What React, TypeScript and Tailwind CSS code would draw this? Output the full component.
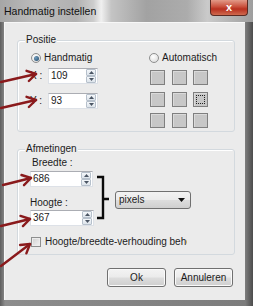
import React from 'react';

type Pt = [number, number];

// red annotation arrow: shaft plus an open two-stroke head at the tip
function Arrow({ from, to }: { from: Pt; to: Pt }) {
  const dx = to[0] - from[0];
  const dy = to[1] - from[1];
  const len = Math.hypot(dx, dy);
  const ux = dx / len;
  const uy = dy / len;
  const head = 10;
  const rot = (a: number): Pt => {
    const c = Math.cos(a);
    const s = Math.sin(a);
    return [to[0] - head * (ux * c - uy * s), to[1] - head * (ux * s + uy * c)];
  };
  const a = rot(0.55);
  const b = rot(-0.55);
  return (
    <g stroke="#8a1a1c" strokeWidth={2.4} fill="none" strokeLinecap="round" strokeLinejoin="round">
      <line x1={from[0]} y1={from[1]} x2={to[0]} y2={to[1]} />
      <polyline points={`${a[0]},${a[1]} ${to[0]},${to[1]} ${b[0]},${b[1]}`} />
    </g>
  );
}

function Spin() {
  return (
    <div className="flex flex-col mr-px">
      {[0, 1].map((i) => (
        <div
          key={i}
          className="w-[10px] h-[7px] rounded-[1px] border border-[#b6c0cb] bg-[linear-gradient(#f4f7fa,#dde4eb)] flex items-center justify-center"
        >
          <svg width="5" height="3" viewBox="0 0 5 3">
            <path d={i === 0 ? 'M0 3 L2.5 0 L5 3 Z' : 'M0 0 L2.5 3 L5 0 Z'} fill="#4a5563" />
          </svg>
        </div>
      ))}
    </div>
  );
}

function NumInput({ value, width }: { value: string; width: string }) {
  return (
    <div
      className={`${width} h-[16px] bg-white border border-[#dde1e7] border-t-[#abadb3] flex items-center justify-between pl-[2px]`}
    >
      <span className="leading-none">{value}</span>
      <Spin />
    </div>
  );
}

function Radio({ checked }: { checked?: boolean }) {
  return (
    <div className="w-[10px] h-[10px] rounded-full border border-[#8e8f8f] bg-[radial-gradient(circle_at_40%_35%,#ffffff,#d6d6d6)] flex items-center justify-center">
      {checked && (
        <div className="w-[5px] h-[5px] rounded-full bg-[radial-gradient(circle_at_35%_35%,#6f9bbd,#1f4766)]" />
      )}
    </div>
  );
}

function Group({ label, className, children }: { label: string; className: string; children: React.ReactNode }) {
  return (
    <div className={`relative w-[218px] rounded-[3px] border border-[#d3d9de] shadow-[inset_1px_1px_0_#ffffff] ${className}`}>
      <span className="absolute left-[7px] -top-[7px] px-px bg-[#ebebeb] leading-[12px]">{label}</span>
      {children}
    </div>
  );
}

function Button({ children }: { children: React.ReactNode }) {
  return (
    <div className="w-[59px] h-[19px] rounded-[3px] border border-[#707070] bg-[linear-gradient(#f3f3f3_0%,#ebebeb_48%,#dddddd_52%,#cfcfcf_100%)] shadow-[inset_0_0_0_1px_#fafafa] flex items-center justify-center">
      {children}
    </div>
  );
}

export default function App() {
  const cells = Array.from({ length: 9 }, (_, i) => i);
  return (
    <div className="relative w-[253px] h-[306px] overflow-hidden bg-[linear-gradient(90deg,#5e5e5e,#8d8d8d_2%,#7c7c7c_97%,#4c4c4c)] font-['Liberation_Sans',Arial,sans-serif] text-[10px] text-[#1b1b1b]">
      {/* title bar */}
      <div className="h-[22px] flex items-start bg-[linear-gradient(90deg,#a6a6a6_0%,#bcbcbc_14%,#b1b1b1_30%,#cdcdcd_37%,#f0f0f0_40%,#c4c4c4_44%,#a2a2a2_58%,#acacac_74%,#cacaca_82%,#9e9e9e_100%)]">
        <span className="ml-[4px] mt-[5px] leading-[12px] text-[10.5px] text-[#111]">Handmatig instellen</span>
        <div className="ml-auto mr-[5px] w-[38px] h-[16px] rounded-b-[4px] border border-t-0 border-[#5b2a22] bg-[linear-gradient(#e29a88,#c9503c_45%,#b8301f_60%,#cf6a4f)] flex items-center justify-center">
          <span className="text-white font-bold text-[11px] leading-none">x</span>
        </div>
      </div>

      <div className="flex h-[278px]">
        <div className="w-[4px]" />
        {/* client area */}
        <div className="w-[241px] bg-[#ebebeb] border-t border-l border-[#f7f7f7] pl-[12px] pt-[17px] flex flex-col">
          <Group label="Positie" className="h-[92px] flex">
            <div className="pl-[12px] pt-[11px] flex flex-col w-[131px]">
              <div className="h-[12px] flex items-center gap-[3px] pl-[1px]">
                <Radio checked />
                <span className="leading-none">Handmatig</span>
              </div>
              <div className="mt-[4px] h-[16px] flex items-center">
                <span className="w-[18px] leading-none">X :</span>
                <NumInput value="109" width="w-[50px]" />
              </div>
              <div className="mt-[9px] h-[16px] flex items-center">
                <span className="w-[18px] leading-none">Y :</span>
                <NumInput value="93" width="w-[50px]" />
              </div>
            </div>
            <div className="pt-[11px] flex flex-col">
              <div className="h-[12px] flex items-center gap-[3px]">
                <Radio />
                <span className="leading-none">Automatisch</span>
              </div>
              <div className="mt-[6px] ml-[1px] grid grid-cols-3 gap-x-[6.5px] gap-y-[6.5px] w-[58px]">
                {cells.map((i) => (
                  <div
                    key={i}
                    className="w-[15px] h-[15px] border border-[#7f7f7f] bg-[#c7c7c7] shadow-[inset_1px_1px_0_#dadada] flex items-center justify-center"
                  >
                    {i === 5 && <div className="w-[9px] h-[9px] border border-dotted border-[#222]" />}
                  </div>
                ))}
              </div>
            </div>
          </Group>

          <Group label="Afmetingen" className="mt-[17px] h-[106px] flex flex-col pl-[12px] pt-[7px]">
            <div className="flex items-center">
              <div className="flex flex-col">
                <span className="h-[12px] leading-[12px] pl-[2px]">Breedte :</span>
                <div className="mt-[2px]">
                  <NumInput value="686" width="w-[63px]" />
                </div>
                <span className="mt-[10px] h-[12px] leading-[12px]">Hoogte :</span>
                <div className="mt-[1px]">
                  <NumInput value="367" width="w-[64px]" />
                </div>
              </div>
              <div className="ml-[21px] mt-[16px] w-[76px] h-[18px] rounded-[3px] border border-[#707070] bg-[linear-gradient(#f2f2f2_0%,#ebebeb_48%,#dddddd_52%,#cfcfcf_100%)] flex items-center justify-between pl-[3px] pr-[5px]">
                <span className="leading-none">pixels</span>
                <svg width="7" height="4" viewBox="0 0 7 4">
                  <path d="M0 0 L3.5 4 L7 0 Z" fill="#111" />
                </svg>
              </div>
            </div>
            <div className="mt-[10px] h-[11px] flex items-center gap-[4px] pl-[1px]">
              <div className="w-[10px] h-[10px] border border-[#8e8f8f] bg-[linear-gradient(135deg,#cfcfcf,#f4f4f4)] shadow-[inset_0_0_0_1px_#ececec]" />
              <div className="w-[142px] overflow-hidden whitespace-nowrap leading-none">Hoogte/breedte-verhouding behouden</div>
            </div>
          </Group>

          <div className="mt-[13px] pr-[12px] flex justify-end gap-[8px]">
            <Button>Ok</Button>
            <Button>Annuleren</Button>
          </div>
        </div>
      </div>

      {/* annotations drawn over the dialog */}
      <svg className="absolute inset-0 pointer-events-none" width="253" height="306" viewBox="0 0 253 306">
        <Arrow from={[1, 82]} to={[36, 74]} />
        <Arrow from={[1, 108]} to={[36, 100]} />
        <Arrow from={[3, 185]} to={[31, 178]} />
        <Arrow from={[1, 226]} to={[30, 219]} />
        <Arrow from={[1, 266]} to={[30, 244]} />
        <path d="M97 177 H103 V218 H97 M103 199 H109" stroke="#0a0a0a" strokeWidth={2.4} fill="none" />
      </svg>
    </div>
  );
}
